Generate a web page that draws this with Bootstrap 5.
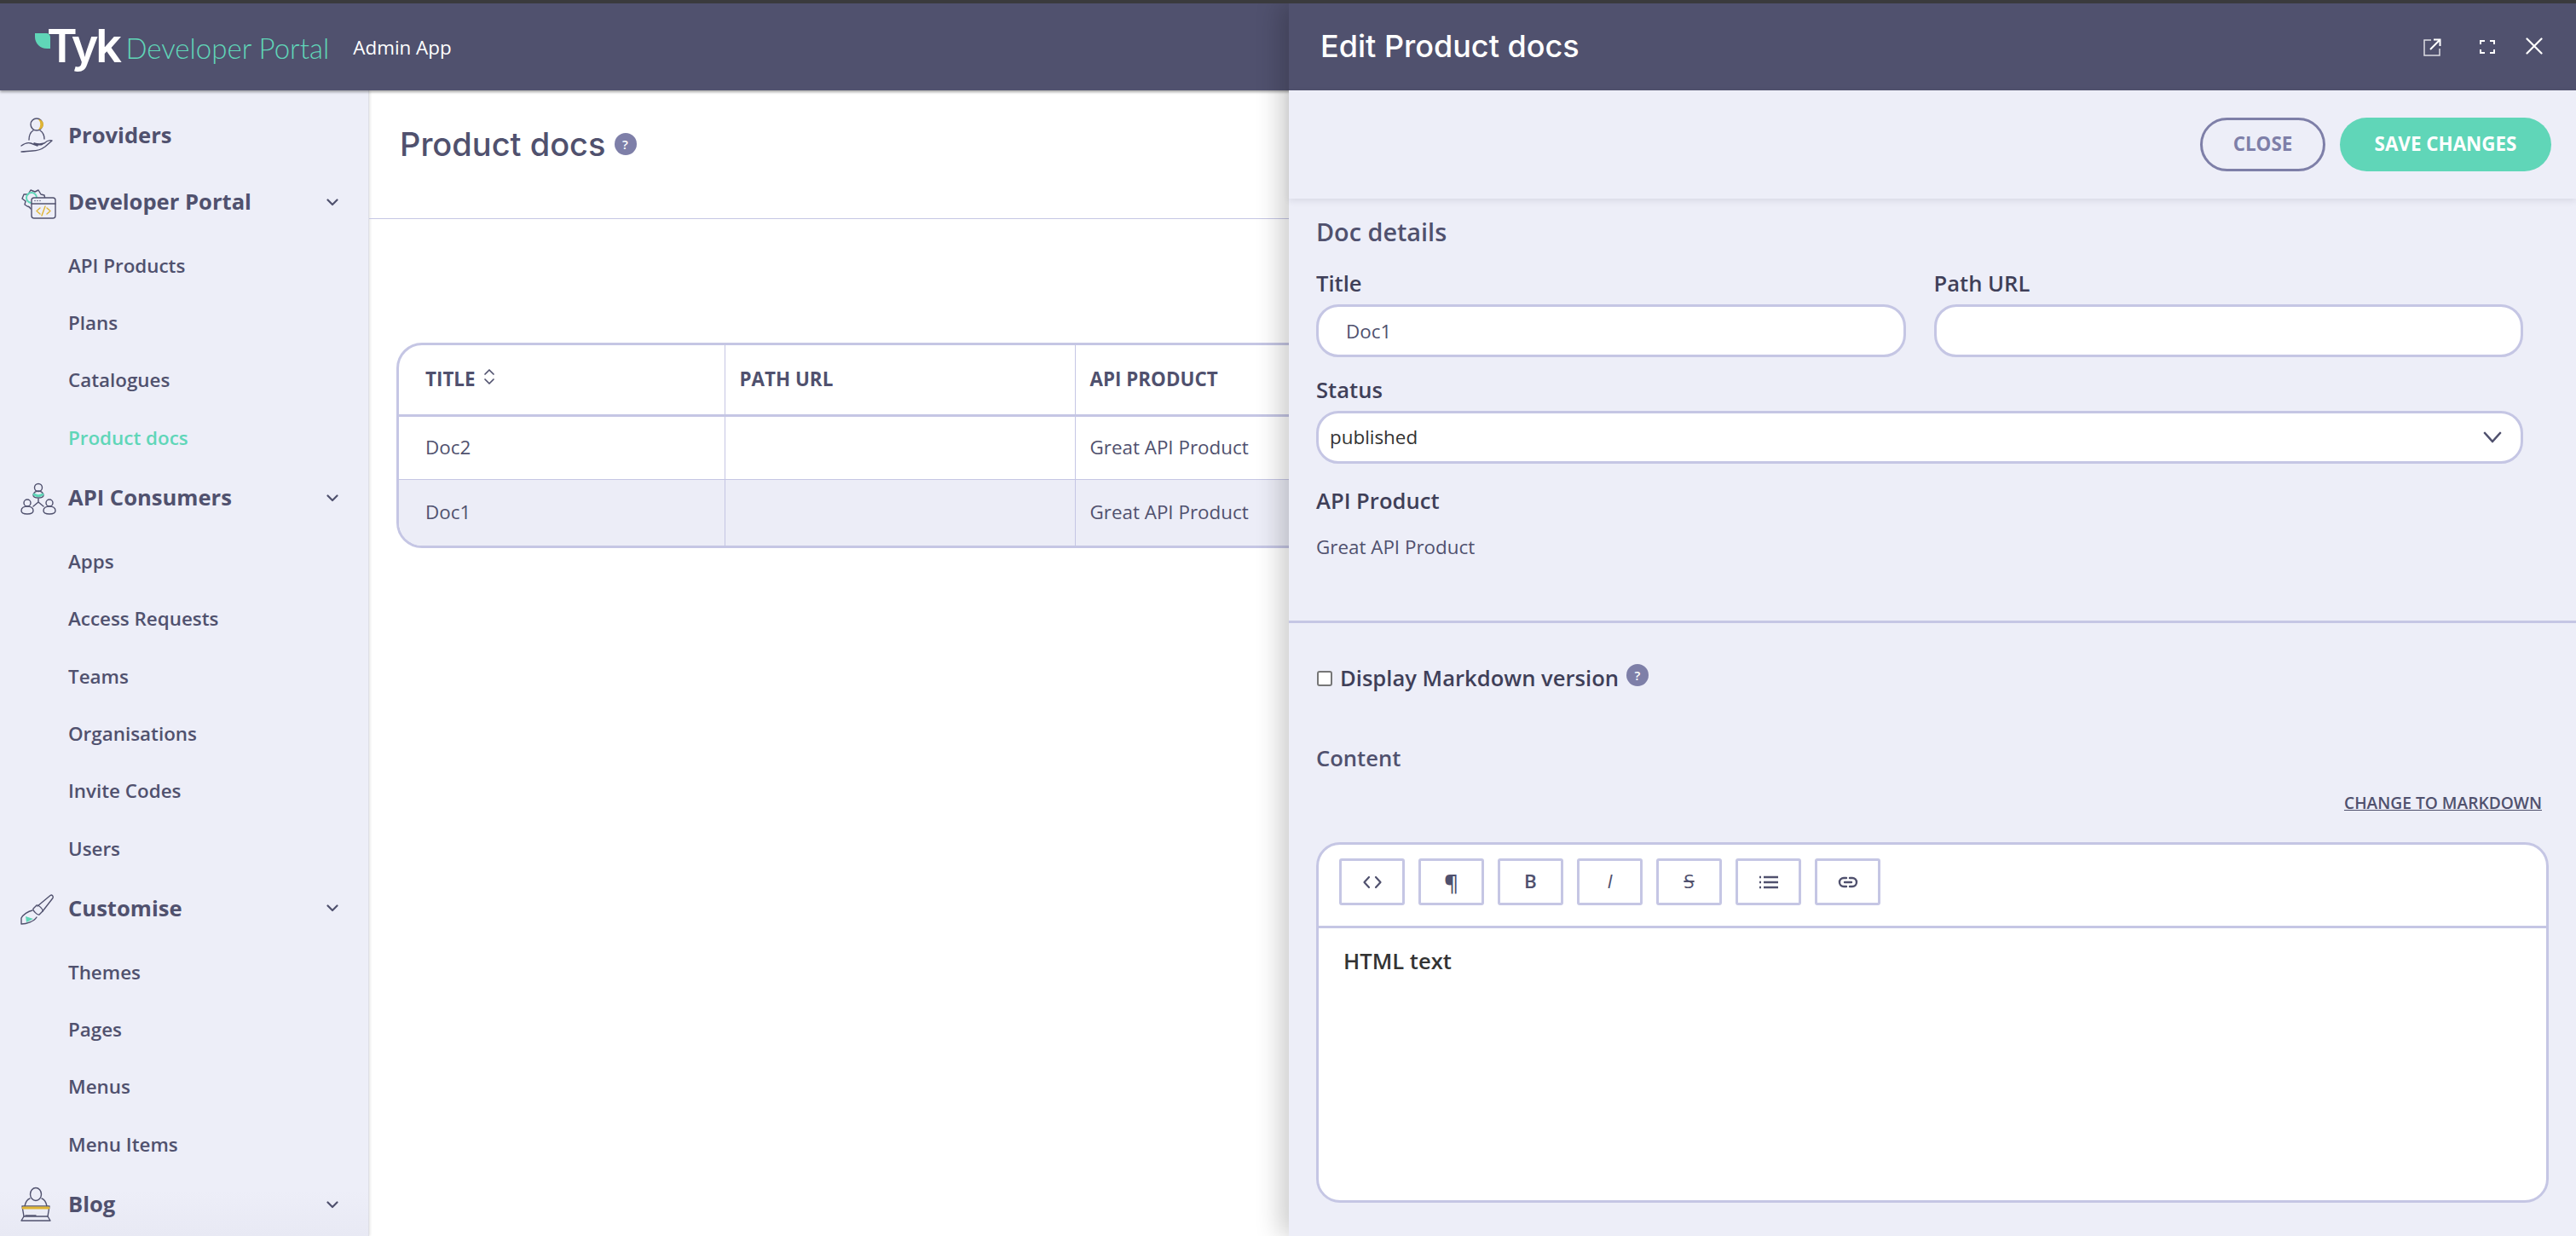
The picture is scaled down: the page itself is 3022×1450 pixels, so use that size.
<!DOCTYPE html>
<html lang="en">
<head>
  <meta charset="UTF-8">
  <meta name="viewport" content="width=device-width, initial-scale=1">
  <title>Tyk Developer Portal - Product docs</title>
  <link href="https://cdn.jsdelivr.net/npm/bootstrap@5.3.3/dist/css/bootstrap.min.css" rel="stylesheet">
  <style>
    html, body {
      height: 1450px;
      overflow: hidden;
    }

    body {
      font-family: "Open Sans", "Liberation Sans", sans-serif;
      color: #50516e;
      background-color: #ffffff;
      position: relative;
    }

    .top-strip {
      height: 4px;
      background-color: #3a3a3d;
      position: relative;
      z-index: 30;
    }

    .app-header {
      height: 102px;
      background-color: #50516e;
      box-shadow: 0 2px 3px rgba(0, 0, 0, 0.35);
      position: relative;
      z-index: 5;
      padding-left: 41px;
    }

    .logo-word {
      font-family: Inter, "Noto Sans", sans-serif;
      font-weight: 600;
      font-size: 54px;
      line-height: 60px;
      letter-spacing: -3.500px;
      color: #ffffff;
      margin-left: -4px;
      margin-top: -2px;
    }

    .logo-sub {
      font-family: Lato, "Noto Sans", sans-serif;
      font-weight: 300;
      font-size: 33px;
      line-height: 40px;
      color: #60d6b8;
      margin-left: 8px;
      margin-top: 2px;
    }

    .logo-app {
      font-size: 22.400px;
      font-weight: 500;
      color: #ffffff;
      margin-left: 28px;
      margin-top: 2px;
    }

    .app-body {
      height: 1344px;
    }

    .side-nav {
      width: 433px;
      flex: 0 0 433px;
      padding-top: 16px;
      background: linear-gradient(#edeef8 96%, #e8e9f4);
      border-right: 1px solid #dedfe6;
      box-shadow: 1px 0 3px rgba(0, 0, 0, 0.12);
    }

    .nav-head {
      height: 74px;
      padding-left: 24px;
      padding-right: 35px;
      font-size: 25.600px;
      font-weight: 700;
      color: #50516e;
    }

    .nav-head svg.nav-ico {
      flex: 0 0 auto;
    }

    .nav-ico-box {
      width: 56px;
      flex: 0 0 56px;
    }

    .nav-sub {
      padding-top: 4px;
    }

    .nav-sub a {
      display: flex;
      align-items: center;
      height: 67.300px;
      padding-left: 80px;
      font-size: 22.400px;
      font-weight: 600;
      color: #50516e;
      text-decoration: none;
    }

    .nav-sub a.current {
      color: #60d6b8;
    }

    .page-main {
      min-width: 0;
    }

    .page-title-bar {
      height: 151px;
      padding-left: 36px;
      padding-top: 41px;
      border-bottom: 1px solid #c5c6e4;
    }

    .page-title {
      font-family: Inter, "Noto Sans", sans-serif;
      font-weight: 500;
      font-size: 38px;
      line-height: 44px;
      margin: 0;
      color: #50516e;
    }

    .help-dot {
      display: inline-flex;
      align-items: center;
      justify-content: center;
      width: 26px;
      height: 26px;
      border-radius: 50%;
      background-color: #7e7fa8;
      color: #ffffff;
      font-size: 15px;
      font-weight: 600;
      line-height: 1;
    }

    .title-help {
      margin-left: 2px;
    }

    .docs-table-wrap {
      margin: 145px 33px 0 32px;
      border: 3px solid #c5c6e4;
      border-radius: 30px;
      overflow: hidden;
    }

    .docs-table {
      table-layout: fixed;
      margin: 0;
      --bs-table-bg: transparent;
      color: #50516e;
      font-size: 22.400px;
    }

    .docs-table th, .docs-table td {
      border: 0;
      border-right: 1px solid #c5c6e4;
      vertical-align: middle;
      padding: 0 17px;
      color: #50516e;
    }

    .docs-table th {
      height: 82px;
      border-bottom: 3px solid #c5c6e4;
      font-weight: 700;
      text-transform: uppercase;
    }

    .docs-table th:first-child, .docs-table td:first-child {
      padding-left: 31px;
    }

    .docs-table td {
      height: 75px;
    }

    .docs-table tr.row-alt td {
      height: 78px;
      background-color: #ecedf7;
      border-top: 1px solid #c5c6e4;
    }

    .col-title { width: 382px; }
    .col-path { width: 411px; }

    .edit-drawer {
      position: absolute;
      top: 4px;
      right: 0;
      bottom: 0;
      width: 1510px;
      background-color: #edeef8;
      box-shadow: -10px 0 28px rgba(0, 0, 0, 0.2);
      z-index: 20;
    }

    .drawer-head {
      height: 102px;
      background-color: #50516e;
      padding-left: 37px;
    }

    .drawer-title {
      font-family: Inter, "Noto Sans", sans-serif;
      font-weight: 500;
      font-size: 36px;
      line-height: 44px;
      color: #ffffff;
      margin: -3px 0 0;
    }

    .drawer-tool {
      position: absolute;
      color: #ffffff;
    }

    .drawer-actions {
      height: 127px;
      padding: 32px 29px 0 0;
      gap: 17px;
      box-shadow: 0 3px 7px rgba(80, 81, 110, 0.12);
      position: relative;
    }

    .btn-pill {
      height: 63px;
      border-radius: 32px;
      font-size: 22.400px;
      font-weight: 700;
      text-transform: uppercase;
      padding: 0 0 2px;
      display: flex;
      align-items: center;
      justify-content: center;
    }

    .btn-pill-line {
      width: 147px;
      border: 3px solid #7e7fa8;
      color: #7e7fa8;
      background: transparent;
    }

    .btn-pill-save {
      width: 248px;
      border: 0;
      color: #ffffff;
      background-color: #60d6b8;
    }

    .doc-form {
      padding: 21px 0 0 32px;
    }

    .doc-form-inner {
      width: 1416px;
    }

    .doc-heading {
      font-size: 28.800px;
      font-weight: 600;
      line-height: 36px;
      margin: 0 0 27px;
      color: #50516e;
    }

    .field-label {
      display: block;
      font-size: 25.600px;
      font-weight: 600;
      line-height: 32px;
      margin: 0 0 8px;
      color: #3f3f58;
    }

    .doc-row {
      --bs-gutter-x: 33px;
    }

    .doc-input.form-control, .doc-input.form-select {
      height: 62px;
      border: 3px solid #c5c6e4;
      border-radius: 26px;
      font-size: 22.400px;
      box-shadow: none;
    }

    .doc-input.form-control {
      padding: 0 32px;
      color: #50516e;
    }

    .doc-input.form-select {
      padding: 0 60px 0 13px;
      color: #333333;
      background-image: url("data:image/svg+xml,%3csvg xmlns='http://www.w3.org/2000/svg' viewBox='0 0 22 14'%3e%3cpath fill='none' stroke='%2350516e' stroke-width='2.6' stroke-linecap='round' stroke-linejoin='round' d='M2 2l9 10 9-10'/%3e%3c/svg%3e");
      background-position: right 22px center;
      background-size: 22px 14px;
    }

    .status-block {
      margin-top: 23px;
    }

    .product-block {
      margin-top: 28px;
    }

    .product-name {
      font-size: 22.400px;
      line-height: 30px;
      margin: 23px 0 0;
      color: #50516e;
    }

    .drawer-rule {
      height: 3px;
      background-color: #c5c6e4;
      margin-top: 71px;
    }

    .markdown-row {
      padding: 49px 0 0 32px;
      height: 81px;
      gap: 9px;
    }

    .markdown-row .form-check-input {
      width: 18px;
      height: 18px;
      margin: 0 0 0 1px;
      border: 2px solid #767676;
      border-radius: 3px;
    }

    .markdown-row label {
      font-size: 25.600px;
      font-weight: 600;
      line-height: 32px;
      color: #3f3f58;
    }

    .content-label {
      padding-left: 32px;
      margin-top: 62px;
      font-size: 25.600px;
      font-weight: 600;
      line-height: 32px;
      color: #50516e;
    }

    .change-link {
      display: block;
      margin: 24px 40px 0 0;
      text-align: right;
      font-size: 19.200px;
      font-weight: 600;
      line-height: 24px;
      text-transform: uppercase;
      color: #50516e;
    }

    .editor-box {
      margin: 34px 32px 0 32px;
      height: 423px;
      background-color: #ffffff;
      border: 3px solid #c5c6e4;
      border-radius: 28px;
      overflow: hidden;
    }

    .editor-tools {
      height: 98px;
      padding: 16px 0 0 24px;
      gap: 16px;
      border-bottom: 3px solid #c5c6e4;
    }

    .tool-btn {
      width: 77px;
      height: 55px;
      padding: 0;
      border: 3px solid #c5c6e4;
      border-radius: 3px;
      background: #ffffff;
      color: #50516e;
      font-size: 22.400px;
      line-height: 1;
      display: flex;
      align-items: center;
      justify-content: center;
    }

    .tool-para {
      font-size: 26px;
      font-weight: 600;
    }

    .editor-text {
      padding: 21px 29px;
      font-size: 25.600px;
      font-weight: 600;
      line-height: 36px;
      color: #333333;
    }
  </style>
</head>
<body>

  <div class="top-strip"></div>

  <!-- Header -->
  <header class="app-header d-flex align-items-center">
    <svg width="18" height="19" viewBox="0 0 18 19" class="flex-shrink-0" style="margin-top:-14px"><path d="M0 0H13C16 0 18 2 18 5V18H14C6 18 0 12 0 4Z" fill="#60d6b8"/></svg>
    <span class="logo-word">Tyk</span>
    <span class="logo-sub">Developer Portal</span>
    <span class="logo-app">Admin App</span>
  </header>

  <div class="app-body d-flex">

    <!-- Sidebar -->
    <nav class="side-nav">
      <div class="nav-head d-flex align-items-center mb-1">
        <div class="nav-ico-box">
          <svg class="nav-ico" width="38" height="42" viewBox="0 0 38 42" fill="none" stroke="#50516e" stroke-width="1.4" stroke-linecap="round" stroke-linejoin="round">
            <circle cx="19" cy="8" r="7"/>
            <path d="M21 2a6 6 0 0 1 0 12a9 9 0 0 0 0-12z" fill="#e0b534" stroke="none"/>
            <path d="M15 15c-3 2-5 5-5 11M23 15c3 2 5 5 5 10"/>
            <path d="M1 40c5 0 8-1 13-1c6 0 11-2 15-5l8-7c-3-1-6 0-9 3c-3 1-8 1-12 0c4 2 8 2 10 1M1 33c4-3 8-4 11-3l8 3"/>
          </svg>
        </div>
        <span>Providers</span>
      </div>

      <div class="nav-head d-flex align-items-center">
        <div class="nav-ico-box">
          <svg class="nav-ico" width="42" height="38" viewBox="0 0 42 38" fill="none" stroke="#50516e" stroke-width="1.4" stroke-linecap="round" stroke-linejoin="round">
            <path d="M12 26c-1-2-2-3-4-3l-3-2 1-4-4-3 2-5 5 0 3-5 5 2 4-2 3 5 4 1 1 5"/>
            <circle cx="13" cy="13" r="6" stroke="#60d6b8" stroke-width="2"/>
            <rect x="13" y="13" width="28" height="24" rx="3" fill="#edeef8"/>
            <path d="M13 20H41"/>
            <path d="M17 16.500h.01M20 16.500h.01M23 16.500h.01"/>
            <path d="M23 25l-4 3.500 4 3.500M31 25l4 3.500-4 3.500M29 23l-4 11" stroke="#e0b534"/>
          </svg>
        </div>
        <span class="flex-grow-1">Developer Portal</span>
        <svg width="14" height="9" viewBox="0 0 14 9" fill="none" stroke="#50516e" stroke-width="2.2" stroke-linecap="round" stroke-linejoin="round"><path d="M1.500 1.500L7 7l5.500-5.500"/></svg>
      </div>
      <div class="nav-sub">
        <a href="#">API Products</a>
        <a href="#">Plans</a>
        <a href="#">Catalogues</a>
        <a href="#" class="current">Product docs</a>
      </div>

      <div class="nav-head d-flex align-items-center">
        <div class="nav-ico-box">
          <svg class="nav-ico" width="42" height="38" viewBox="0 0 42 38" fill="none" stroke="#50516e" stroke-width="1.4" stroke-linecap="round" stroke-linejoin="round">
            <circle cx="21" cy="6" r="4.500"/>
            <path d="M15 15c0-3 3-5 6-5s6 2 6 5c0 2-3 3-6 3s-6-1-6-3z"/>
            <path d="M16 14c3 2 7 2 10 0" stroke="#60d6b8" stroke-width="3"/>
            <circle cx="8" cy="24" r="4"/>
            <path d="M1 33c0-3 3-5 7-5s7 2 7 5-3 4-7 4-7-1-7-4z"/>
            <circle cx="34" cy="24" r="4"/>
            <path d="M27 33c0-3 3-5 7-5s7 2 7 5-3 4-7 4-7-1-7-4z"/>
            <path d="M21 19v4M21 23l-6 5M21 23l6 5"/>
          </svg>
        </div>
        <span class="flex-grow-1">API Consumers</span>
        <svg width="14" height="9" viewBox="0 0 14 9" fill="none" stroke="#50516e" stroke-width="2.2" stroke-linecap="round" stroke-linejoin="round"><path d="M1.500 1.500L7 7l5.500-5.500"/></svg>
      </div>
      <div class="nav-sub">
        <a href="#">Apps</a>
        <a href="#">Access Requests</a>
        <a href="#">Teams</a>
        <a href="#">Organisations</a>
        <a href="#">Invite Codes</a>
        <a href="#">Users</a>
      </div>

      <div class="nav-head d-flex align-items-center">
        <div class="nav-ico-box">
          <svg class="nav-ico" width="40" height="38" viewBox="0 0 40 38" fill="none" stroke="#50516e" stroke-width="1.4" stroke-linecap="round" stroke-linejoin="round">
            <path d="M20 15L35 2.500c2-1.500 4 1 3 3L26 21"/>
            <path d="M15 18l4-4c2-1 8 5 7 7l-4 4c-2 1-8-5-7-7z"/>
            <path d="M14 20c-5 1-11 5-13 9l0 7c6 0 15-3 18-8"/>
            <path d="M6 27l9 3-8 4z" fill="#60d6b8" stroke="none"/>
          </svg>
        </div>
        <span class="flex-grow-1">Customise</span>
        <svg width="14" height="9" viewBox="0 0 14 9" fill="none" stroke="#50516e" stroke-width="2.2" stroke-linecap="round" stroke-linejoin="round"><path d="M1.500 1.500L7 7l5.500-5.500"/></svg>
      </div>
      <div class="nav-sub">
        <a href="#">Themes</a>
        <a href="#">Pages</a>
        <a href="#">Menus</a>
        <a href="#">Menu Items</a>
      </div>

      <div class="nav-head d-flex align-items-center">
        <div class="nav-ico-box">
          <svg class="nav-ico" width="38" height="42" viewBox="0 0 38 42" fill="none" stroke="#50516e" stroke-width="1.4" stroke-linecap="round" stroke-linejoin="round">
            <ellipse cx="18" cy="9" rx="6.500" ry="7.500"/>
            <path d="M11 14c-3 1-5 4-6 9M25 14c3 1 5 4 6 9"/>
            <path d="M2 23H34L32 35H4Z"/>
            <path d="M3 25H33" stroke="#e0b534" stroke-width="3"/>
            <path d="M1 40H35L32 35M4 35L1 40M6 34H18"/>
          </svg>
        </div>
        <span class="flex-grow-1">Blog</span>
        <svg width="14" height="9" viewBox="0 0 14 9" fill="none" stroke="#50516e" stroke-width="2.2" stroke-linecap="round" stroke-linejoin="round"><path d="M1.500 1.500L7 7l5.500-5.500"/></svg>
      </div>
    </nav>

    <!-- Main content -->
    <main class="page-main flex-grow-1">
      <div class="page-title-bar">
        <div class="d-flex align-items-center gap-2">
          <h1 class="page-title">Product docs</h1>
          <span class="help-dot title-help">?</span>
        </div>
      </div>

      <div class="docs-table-wrap">
        <table class="table docs-table">
          <colgroup>
            <col class="col-title">
            <col class="col-path">
            <col>
          </colgroup>
          <thead>
            <tr>
              <th>Title
                <svg class="ms-1 align-top mt-1" width="14" height="20" viewBox="0 0 14 20" fill="none" stroke="#50516e" stroke-width="1.700" stroke-linecap="round" stroke-linejoin="round"><path d="M2 7l5-5 5 5M2 13l5 5 5-5"/></svg>
              </th>
              <th>Path URL</th>
              <th>API Product</th>
            </tr>
          </thead>
          <tbody>
            <tr>
              <td>Doc2</td>
              <td></td>
              <td>Great API Product</td>
            </tr>
            <tr class="row-alt">
              <td>Doc1</td>
              <td></td>
              <td>Great API Product</td>
            </tr>
          </tbody>
        </table>
      </div>
    </main>
  </div>

  <!-- Edit drawer -->
  <aside class="edit-drawer">
    <div class="drawer-head d-flex align-items-center">
      <h2 class="drawer-title">Edit Product docs</h2>
      <svg class="drawer-tool" style="left:1331px;top:41px" width="21" height="21" viewBox="0 0 21 21" fill="none" stroke="#ffffff" stroke-width="1.500"><path d="M9 2H1V20H19V12" stroke-opacity=".8"/><path d="M8 13L19 2M12 1.500H19.500V9" stroke-width="2"/></svg>
      <svg class="drawer-tool" style="left:1397px;top:43px" width="18" height="16" viewBox="0 0 18 16" fill="none" stroke="#ffffff" stroke-width="2"><path d="M1 5V1H6M12 1H17V5M17 11V15H12M6 15H1V11"/></svg>
      <svg class="drawer-tool" style="left:1451px;top:40px" width="20" height="20" viewBox="0 0 20 20" fill="none" stroke="#ffffff" stroke-width="2.200" stroke-linecap="round"><path d="M1.500 1.500L18.500 18.500M18.500 1.500L1.500 18.500"/></svg>
    </div>

    <div class="drawer-actions d-flex justify-content-end align-items-start">
      <button type="button" class="btn btn-pill btn-pill-line">Close</button>
      <button type="button" class="btn btn-pill btn-pill-save">Save changes</button>
    </div>

    <form class="doc-form">
      <div class="doc-form-inner">
        <h3 class="doc-heading">Doc details</h3>
        <div class="row doc-row">
          <div class="col-6">
            <label class="field-label" for="docTitle">Title</label>
            <input type="text" id="docTitle" class="form-control doc-input" value="Doc1">
          </div>
          <div class="col-6">
            <label class="field-label" for="docPath">Path URL</label>
            <input type="text" id="docPath" class="form-control doc-input">
          </div>
        </div>
        <div class="status-block">
          <label class="field-label" for="docStatus">Status</label>
          <select id="docStatus" class="form-select doc-input">
            <option>published</option>
          </select>
        </div>
        <div class="product-block">
          <div class="field-label mb-0">API Product</div>
          <p class="product-name">Great API Product</p>
        </div>
      </div>
    </form>

    <div class="drawer-rule"></div>

    <div class="markdown-row d-flex align-items-center">
      <input type="checkbox" id="showMarkdown" class="form-check-input">
      <label for="showMarkdown">Display Markdown version</label>
      <span class="help-dot mb-2">?</span>
    </div>

    <div class="content-label">Content</div>
    <a href="#" class="change-link">Change to Markdown</a>

    <div class="editor-box">
      <div class="editor-tools d-flex">
        <button type="button" class="tool-btn" title="Code">
          <svg width="22" height="16" viewBox="0 0 22 16" fill="none" stroke="#50516e" stroke-width="2.200" stroke-linecap="round" stroke-linejoin="round"><path d="M7 2L1.500 8 7 14M15 2l5.500 6L15 14"/></svg>
        </button>
        <button type="button" class="tool-btn tool-para" title="Paragraph">¶</button>
        <button type="button" class="tool-btn fw-semibold" title="Bold">B</button>
        <button type="button" class="tool-btn fst-italic" title="Italic">I</button>
        <button type="button" class="tool-btn text-decoration-line-through" title="Strike">S</button>
        <button type="button" class="tool-btn" title="List">
          <svg width="24" height="16" viewBox="0 0 24 16" fill="none" stroke="#50516e" stroke-width="2.400"><path d="M6 2H23M6 8H23M6 14H23"/><path d="M1 2H3M1 8H3M1 14H3"/></svg>
        </button>
        <button type="button" class="tool-btn" title="Link">
          <svg width="24" height="14" viewBox="0 0 24 14" fill="none" stroke="#50516e" stroke-width="2.400" stroke-linecap="round"><path d="M10 2H7a5 5 0 0 0 0 10h3M14 2h3a5 5 0 0 1 0 10h-3M8 7h8"/></svg>
        </button>
      </div>
      <div class="editor-text">HTML text</div>
    </div>
  </aside>

  <script src="https://cdn.jsdelivr.net/npm/bootstrap@5.3.3/dist/js/bootstrap.bundle.min.js"></script>
</body>
</html>
